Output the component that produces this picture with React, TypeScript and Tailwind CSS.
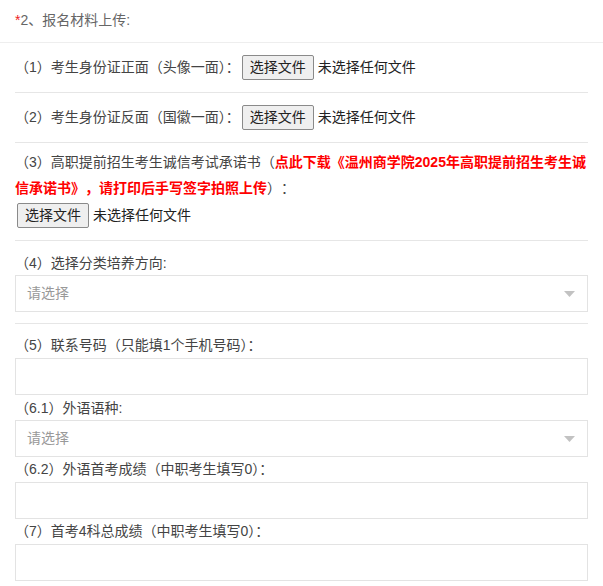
import React from 'react';

const font = { fontFamily: '"Liberation Sans", "Noto Sans CJK SC", sans-serif' };

function FilePick() {
    return (
        <span className="inline-flex items-center ml-[2px]">
            <span className="inline-flex items-center h-[25px] px-[7px] border border-[#8a8a8a] rounded-[2px] bg-[#efefef] text-[14px] text-[#222]">
                选择文件
            </span>
            <span className="ml-[4px] text-[14px] text-[#222]">未选择任何文件</span>
        </span>
    );
}

function SelectBox() {
    return (
        <div className="h-[37px] border border-[#e3e3e3] bg-white flex items-center justify-between pl-[11px] pr-[12px]">
            <span className="text-[14px] text-[#999]">请选择</span>
            <svg width="11" height="6" viewBox="0 0 11 6">
                <polygon points="0,0 11,0 5.5,6" fill="#c2c2c2" />
            </svg>
        </div>
    );
}

function TextBox() {
    return <div className="h-[37px] border border-[#e3e3e3] bg-white" />;
}

export default function App() {
    return (
        <div className="w-[603px] h-[586px] bg-white text-[14px] text-[#444]" style={font}>
            {/* header */}
            <div className="h-[43px] border-b border-[#eeeeee] px-[15px] pt-[9px] leading-[22px] text-[#666]">
                <span className="text-[#e22]">*</span>2、报名材料上传:
            </div>

            <div className="px-[15px]">
                <div className="h-[50px] flex items-center border-b border-[#e6e6e6]">
                    <span>（1）考生身份证正面（头像一面）：</span>
                    <FilePick />
                </div>

                <div className="h-[50px] flex items-center border-b border-[#e6e6e6]">
                    <span>（2）考生身份证反面（国徽一面）：</span>
                    <FilePick />
                </div>

                <div className="pt-[6px] pb-[12px] border-b border-[#e6e6e6]">
                    <div className="leading-[26px] [text-spacing-trim:space-all]">
                        （3）高职提前招生考生诚信考试承诺书（
                        <span className="font-bold text-[#f00]">点此下载《温州商学院2025年高职提前招生考生诚信承诺书》，请打印后手写签字拍照上传</span>
                        ）：
                    </div>
                    <div className="mt-[2px]">
                        <FilePick />
                    </div>
                </div>

                <div className="pt-[10px] pb-[11px] border-b border-[#e6e6e6]">
                    <div className="h-[24px] leading-[24px]">（4）选择分类培养方向:</div>
                    <SelectBox />
                </div>

                <div className="pt-[9px]">
                    <div className="h-[24px] leading-[24px]">（5）联系号码（只能填1个手机号码）：</div>
                    <div className="mt-[1px]"><TextBox /></div>

                    <div className="h-[24px] leading-[24px] mt-[1px]">（6.1）外语语种:</div>
                    <SelectBox />

                    <div className="h-[24px] leading-[24px]">（6.2）外语首考成绩（中职考生填写0）：</div>
                    <div className="mt-[1px]"><TextBox /></div>

                    <div className="h-[24px] leading-[24px]">（7）首考4科总成绩（中职考生填写0）：</div>
                    <div className="mt-[1px]"><TextBox /></div>
                </div>
            </div>
        </div>
    );
}
